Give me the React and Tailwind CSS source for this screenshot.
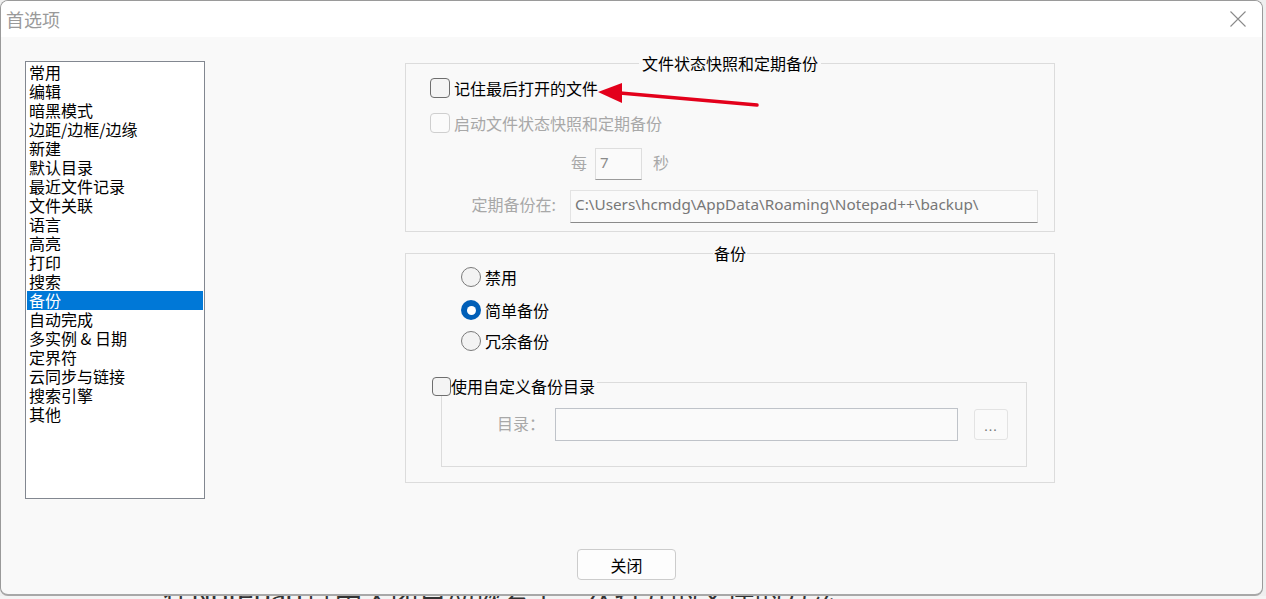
import React from "react";

const font = { fontFamily: '"Noto Sans CJK SC", "Noto Sans", sans-serif' };

const items = [
  "常用", "编辑", "暗黑模式", "边距/边框/边缘", "新建", "默认目录", "最近文件记录", "文件关联",
  "语言", "高亮", "打印", "搜索", "备份", "自动完成", "多实例 & 日期", "定界符", "云同步与链接", "搜索引擎", "其他",
];

function Checkbox({ disabled }) {
  return (
    <div
      className={
        "w-[20px] h-[20px] rounded-[4px] border shrink-0 " +
        (disabled ? "border-[#cfcfcf] bg-[#fbfbfb]" : "border-[#6e6e6e] bg-[#f4f4f4]")
      }
    />
  );
}

function Radio({ checked }) {
  if (checked)
    return (
      <div className="w-[20px] h-[20px] rounded-full bg-[#005fb8] flex items-center justify-center shrink-0">
        <div className="w-[9px] h-[9px] rounded-full bg-white" />
      </div>
    );
  return <div className="w-[20px] h-[20px] rounded-full border border-[#7a7a7a] bg-[#f3f3f3] shrink-0" />;
}

export default function App() {
  return (
    <div className="relative w-[1266px] h-[599px] overflow-hidden bg-[#efefef] flex flex-col" style={font}>
      {/* dialog window */}
      <div className="w-[1263px] h-[596px] shrink-0 rounded-[8px] border border-[#9a9a9a] border-b-2 border-b-[#a8a8a8] bg-[#f9f9f9] overflow-hidden">
        {/* title bar */}
        <div className="h-[36px] bg-white flex items-center justify-between pl-[5px] pr-[16px]">
          <span className="text-[18px] text-[#9a9a9a] leading-none">首选项</span>
          <svg width="16" height="16" viewBox="0 0 16 16">
            <path d="M0.5 0.5 L15.5 15.5 M15.5 0.5 L0.5 15.5" stroke="#8a8a8a" strokeWidth="1.1" />
          </svg>
        </div>

        {/* body */}
        <div className="flex flex-col pl-[24px] pt-[24px]">
          <div className="flex items-start">
            {/* list box */}
            <div className="w-[180px] h-[438px] border border-[#828790] bg-white p-px">
              {items.map((t) => (
                <div
                  key={t}
                  className={
                    "h-[19px] leading-[19px] pl-[2px] text-[16px] whitespace-nowrap " +
                    (t === "备份" ? "bg-[#0078d7] text-white" : "text-black")
                  }
                >
                  {t}
                </div>
              ))}
            </div>

            {/* right column */}
            <div className="ml-[200px] mt-[2px] flex flex-col">
              {/* group 1 */}
              <div className="relative w-[650px] h-[169px] border border-[#dcdcdc] pt-[14px]">
                <div className="absolute -top-[12px] left-0 right-0 flex justify-center">
                  <span className="bg-[#f9f9f9] px-[3px] text-[16px] leading-[22px] text-black">文件状态快照和定期备份</span>
                </div>
                <div className="flex items-center pl-[24px] h-[20px]">
                  <Checkbox />
                  <span className="ml-[4px] text-[16px] text-black">记住最后打开的文件</span>
                </div>
                <div className="flex items-center pl-[24px] h-[20px] mt-[15px]">
                  <Checkbox disabled />
                  <span className="ml-[4px] text-[16px] text-[#a8a8a8]">启动文件状态快照和定期备份</span>
                </div>
                <div className="flex items-start mt-[15px] h-[32px]">
                  <span className="w-[189px] text-right pr-[8px] text-[16px] leading-[28px] text-[#a8a8a8]">每</span>
                  <div className="w-[47px] h-[32px] border border-[#dedede] border-b-[#9a9a9a] bg-[#fafafa] pl-[4px] pt-[1px] text-[15px] leading-[24px] text-[#8a8a8a]" style={{ fontFamily: '"Noto Sans", sans-serif' }}>
                    7
                  </div>
                  <span className="ml-[11px] text-[16px] leading-[28px] text-[#a8a8a8]">秒</span>
                </div>
                <div className="flex items-start mt-[10px] h-[33px]">
                  <span className="w-[164px] text-right pr-[14px] text-[16px] leading-[29px] text-[#a8a8a8]">定期备份在:</span>
                  <div
                    className="w-[468px] h-[33px] border border-[#e3e3e3] border-b-[#8a8a8a] bg-[#fafafa] pl-[4px] text-[15.3px] leading-[26px] text-[#777] whitespace-nowrap"
                    style={{ fontFamily: '"Noto Sans", sans-serif' }}
                  >
                    C:\Users\hcmdg\AppData\Roaming\Notepad++\backup\
                  </div>
                </div>
              </div>

              {/* group 2 */}
              <div className="relative w-[650px] h-[230px] border border-[#dcdcdc] mt-[21px] pt-[13px]">
                <div className="absolute -top-[12px] left-0 right-0 flex justify-center">
                  <span className="bg-[#f9f9f9] px-[1px] text-[16px] leading-[22px] text-black">备份</span>
                </div>
                <div className="flex items-center pl-[55px] h-[20px]">
                  <Radio />
                  <span className="ml-[4px] text-[16px] leading-[20px] text-black">禁用</span>
                </div>
                <div className="flex items-center pl-[55px] h-[20px] mt-[13px]">
                  <Radio checked />
                  <span className="ml-[4px] text-[16px] leading-[20px] text-black">简单备份</span>
                </div>
                <div className="flex items-center pl-[55px] h-[20px] mt-[11px]">
                  <Radio />
                  <span className="ml-[4px] text-[16px] leading-[20px] text-black">冗余备份</span>
                </div>

                {/* custom dir sub-group */}
                <div className="relative ml-[35px] mt-[31px] w-[586px] h-[85px] border border-[#dcdcdc] pt-[25px]">
                  <div className="absolute -left-[10px] -top-[7px] flex items-center bg-[#f9f9f9] h-[20px]">
                    <div className="w-[19px] h-[19px] rounded-[4px] border border-[#6e6e6e] bg-[#f4f4f4]" />
                    <span className="pr-[2px] text-[16px] text-black leading-[20px]">使用自定义备份目录</span>
                  </div>
                  <div className="flex items-start">
                    <span className="w-[113px] pl-[55px] text-[16px] text-[#a8a8a8] leading-[31px]">目录：</span>
                    <div className="w-[403px] h-[33px] border border-[#bfc3c9] bg-[#fafafa]" />
                    <div className="ml-[16px] mt-px w-[34px] h-[31px] rounded-[3px] border border-[#e3e3e3] bg-[#fafafa] flex items-end justify-center pb-[7px]">
                      <span className="text-[13px] leading-[12px] text-[#777] tracking-[1px]" style={{ fontFamily: '"Noto Sans", sans-serif' }}>...</span>
                    </div>
                  </div>
                </div>
              </div>
            </div>
          </div>

          {/* close button */}
          <div className="mt-[50px] ml-[552px]">
            <button className="w-[99px] h-[31px] rounded-[4px] border border-[#cccccc] bg-[#fdfdfd] text-[16px] text-black leading-none">
              关闭
            </button>
          </div>
        </div>
      </div>

      {/* slice of the page behind the dialog */}
      <div className="h-[3px] shrink-0 overflow-hidden bg-[#f4f4f4]">
        <div className="-mt-[20px] pl-[163px] text-[28px] leading-[34px] text-[#333] whitespace-nowrap">
          在Notepad++中关闭自动恢复上一次打开的文件的方法:
        </div>
      </div>

      {/* red annotation arrow */}
      <svg className="absolute z-20 left-[595px] top-[80px]" width="170" height="32" viewBox="0 0 170 32">
        <path d="M25 13 L162 25" stroke="#e3001b" strokeWidth="3.5" strokeLinecap="round" />
        <path d="M3 12 L27 3 L27 23 Z" fill="#e3001b" />
      </svg>
    </div>
  );
}
